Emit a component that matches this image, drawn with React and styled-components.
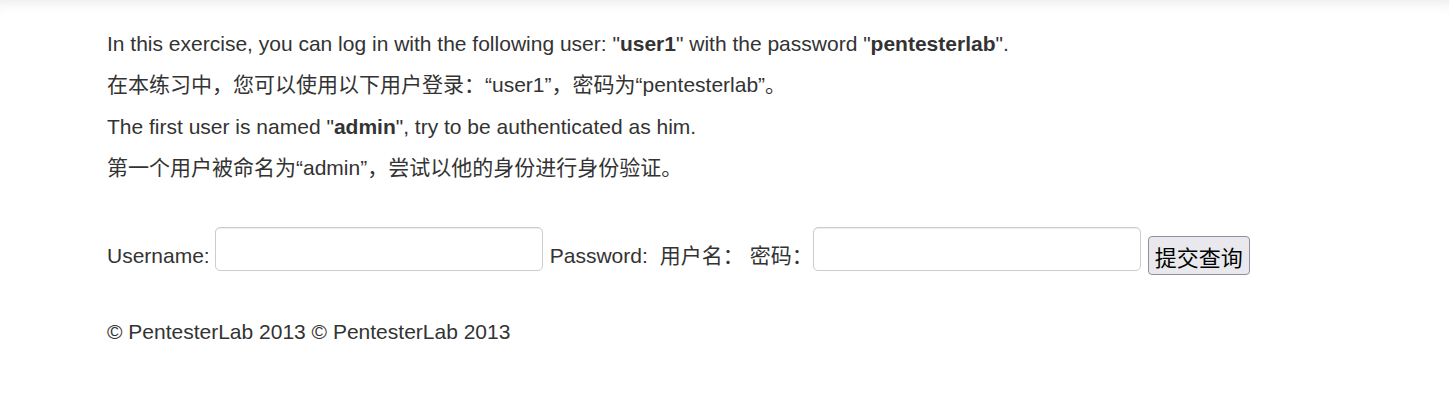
import React from "react";
import styled, { createGlobalStyle } from "styled-components";

const Global = createGlobalStyle`
  html, body { margin: 0; padding: 0; background: #fff; }
  body {
    font-family: "Liberation Sans", Arial, "Noto Sans CJK SC", sans-serif;
    font-size: 21px;
    color: #333;
  }
`;

const Page = styled.div`
  min-height: 411px;
  box-shadow: inset 0 12px 14px -10px rgba(0, 0, 0, 0.09);
`;

const Container = styled.div`
  padding: 31px 107px 0;
`;

const Para = styled.p`
  margin: 0 0 15.4px;
  line-height: 26px;
`;

const Form = styled.form`
  margin: 46px 0 0;
  line-height: 26px;
  white-space: nowrap;
`;

const Label = styled.span`
  margin-right: ${(p) => p.$gap || 0}px;
`;

const Input = styled.input`
  box-sizing: border-box;
  width: 328px;
  height: 44px;
  margin: 0 ${(p) => p.$right ?? 7}px 0 ${(p) => p.$left ?? 5}px;
  padding: 6px 12px;
  border: 1px solid #ccc;
  border-radius: 5px;
  box-shadow: inset 0 1px 1px rgba(0, 0, 0, 0.075);
  font-size: 18px;
  vertical-align: 8px;
`;

const Button = styled.button`
  box-sizing: border-box;
  height: 39px;
  padding: 0 6px;
  background: #e9e9ed;
  border: 1px solid #8f8f9d;
  border-radius: 4px;
  color: #000;
  font-family: "Noto Sans CJK SC", sans-serif;
  font-size: 22px;
  line-height: 26px;
  vertical-align: -3px;
`;

const Footer = styled.p`
  margin: 44px 0 0;
  line-height: 26px;
`;

export default function App() {
  return (
    <Page>
      <Global />
      <Container>
        <Para>
          In this exercise, you can log in with the following user: "<b>user1</b>" with the password "<b>pentesterlab</b>".
        </Para>
        <Para>在本练习中，您可以使用以下用户登录：“user1”，密码为“pentesterlab”。</Para>
        <Para>
          The first user is named "<b>admin</b>", try to be authenticated as him.
        </Para>
        <Para>第一个用户被命名为“admin”，尝试以他的身份进行身份验证。</Para>
        <Form onSubmit={(e) => e.preventDefault()}>
          <Label>Username:</Label>
          <Input type="text" />
          <Label $gap={12}>Password:</Label>
          <Label $gap={6}>用户名：</Label>
          <Label>密码：</Label>
          <Input type="password" $left={0} $right={7} />
          <Button type="submit">提交查询</Button>
        </Form>
        <Footer>© PentesterLab 2013 © PentesterLab 2013</Footer>
      </Container>
    </Page>
  );
}
